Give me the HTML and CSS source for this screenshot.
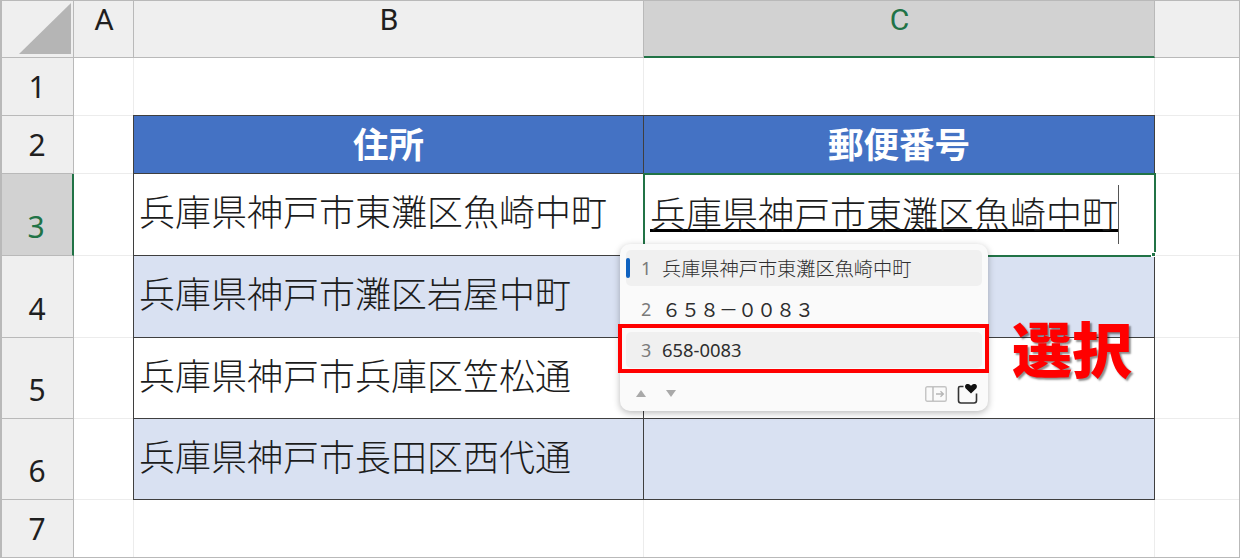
FILE: index.html
```html
<!DOCTYPE html>
<html lang="ja">
<head>
<meta charset="utf-8">
<title>Excel</title>
<link rel="stylesheet" href="styles.css">
</head>
<body>
<div class="sheet">
  <div class="cell hd corner"><svg class="corner-mark" width="73" height="57" viewBox="0 0 73 57"><polygon points="19,54 71,3 71,54" fill="#b5b5b5"/></svg></div>
  <div class="cell hd col">A</div>
  <div class="cell hd col">B</div>
  <div class="cell hd col active-col">C</div>
  <div class="cell hd col"></div>

  <div class="cell hd row">1</div><div class="cell"></div><div class="cell"></div><div class="cell"></div><div class="cell"></div>

  <div class="cell hd row">2</div><div class="cell"></div>
  <div class="cell tbl tbl-top tbl-left th">住所</div>
  <div class="cell tbl tbl-top th">郵便番号</div>
  <div class="cell"></div>

  <div class="cell hd row active-row">3</div><div class="cell"></div>
  <div class="cell tbl tbl-left td">兵庫県神戸市東灘区魚崎中町</div>
  <div class="cell tbl td editing"><span class="edit-text">兵庫県神戸市東灘区魚崎中町</span><i class="handle"></i></div>
  <div class="cell"></div>

  <div class="cell hd row">4</div><div class="cell"></div>
  <div class="cell tbl tbl-left td band">兵庫県神戸市灘区岩屋中町</div>
  <div class="cell tbl td band"></div>
  <div class="cell"></div>

  <div class="cell hd row">5</div><div class="cell"></div>
  <div class="cell tbl tbl-left td">兵庫県神戸市兵庫区笠松通</div>
  <div class="cell tbl td"></div>
  <div class="cell"></div>

  <div class="cell hd row">6</div><div class="cell"></div>
  <div class="cell tbl tbl-left td band">兵庫県神戸市長田区西代通</div>
  <div class="cell tbl td band"></div>
  <div class="cell"></div>

  <div class="cell hd row">7</div><div class="cell"></div><div class="cell"></div><div class="cell"></div><div class="cell"></div>

  <div class="ime">
    <div class="ime-item current"><i class="ime-bar"></i><span class="ime-num">1</span><span class="ime-text">兵庫県神戸市東灘区魚崎中町</span></div>
    <div class="ime-item"><span class="ime-num">2</span><span class="ime-text wide">６５８－００８３</span></div>
    <div class="ime-item current"><span class="ime-num">3</span><span class="ime-text latin">658-0083</span></div>
    <div class="ime-foot">
      <svg class="tri" width="12" height="9" viewBox="0 0 12 9"><path d="M6 1 L11 8 H1 Z" fill="#a9a9a9"/></svg>
      <svg class="tri" width="12" height="9" viewBox="0 0 12 9"><path d="M1 1 H11 L6 8 Z" fill="#a9a9a9"/></svg>
      <span class="ime-spacer"></span>
      <svg class="ico-panel" width="22" height="16" viewBox="0 0 22 16"><rect x="0.75" y="0.75" width="20.5" height="14.5" rx="1.5" fill="none" stroke="#c4c4c4" stroke-width="1.4"/><path d="M8 1V15M11 8H18M15.500 5.200L18.400 8L15.500 10.800" fill="none" stroke="#b5b5b5" stroke-width="1.3"/></svg>
      <svg class="ico-fav" width="21" height="22" viewBox="0 0 21 22"><path d="M6.500 3.500H3Q1.500 3.500 1.500 5V17.500Q1.500 20 4 20H17Q19.500 20 19.500 17.500V10.500" fill="none" stroke="#333" stroke-width="1.600"/><path d="M14 10.500L8.800 5.500C7 3 8.800 0.800 11 1C12.500 1.200 13.500 2 14 3C14.500 2 15.500 1.200 17 1C19.200 0.800 21 3 19.200 5.500Z" fill="#111"/></svg>
    </div>
    <div class="ime-frame"></div>
  </div>
  <div class="callout">選択</div>
</div>
</body>
</html>
```
FILE: styles.css
```css
* { box-sizing: border-box; }
html, body { margin: 0; padding: 0; background: #fff; }
body { width: 1240px; height: 558px; overflow: hidden; }

.sheet {
  position: relative;
  display: grid;
  grid-template-columns: 74px 60px 510px 511px 85px;
  grid-template-rows: 58px 58px 58px 82px 82px 81px 81px 58px;
  width: 1240px;
  height: 558px;
  font-family: "Noto Sans CJK JP", "Noto Sans", sans-serif;
  color: #222;
}
.sheet::after {
  content: "";
  position: absolute;
  inset: 0;
  border: 1px solid #b9b9b9;
  border-left-width: 2px;
  pointer-events: none;
}

.cell {
  position: relative;
  display: flex;
  border-right: 1px solid #ececec;
  border-bottom: 1px solid #ececec;
}

.hd {
  background: #efefef;
  border-right: 1px solid #b9b9b9;
  border-bottom: 1px solid #b9b9b9;
  font-family: "Noto Sans", sans-serif;
  font-size: 30px;
  line-height: 36px;
  color: #1f1f1f;
  justify-content: center;
}
.col {
  align-items: flex-start;
  font-family: Roboto, sans-serif;
  line-height: 36px;
  padding: 2px 0 0 1px;
}
.row { align-items: flex-end; padding: 0 0 10px 1px; }
.corner-mark { position: absolute; left: 0; top: 0; }
.active-col {
  background: #d2d2d2;
  color: #217346;
  border-bottom: 2px solid #217346;
}
.active-row {
  background: #d2d2d2;
  color: #217346;
  border-right: 2px solid #217346;
  padding-left: 0;
}

.tbl {
  border-right: 1px solid #3f3f3f;
  border-bottom: 1px solid #3f3f3f;
  align-items: center;
}
.tbl-top { border-top: 1px solid #3f3f3f; margin-top: -1px; }
.tbl-left { border-left: 1px solid #3f3f3f; margin-left: -1px; }

.th {
  background: #4472c4;
  color: #fff;
  font-size: 35.5px;
  font-weight: 700;
  line-height: 48px;
  padding-bottom: 4px;
  justify-content: center;
}
.td {
  font-size: 36px;
  font-weight: 300;
  line-height: 48px;
  padding: 0 0 9px 5px;
  white-space: nowrap;
  color: #1c1c1c;
}
.band { background: #d9e1f2; }

.editing {
  outline: 2px solid #217346;
  outline-offset: -1px;
  padding-left: 6px;
  padding-bottom: 0;
  align-items: flex-start;
  z-index: 1;
}
.edit-text {
  display: block;
  position: relative;
  height: 44px;
  margin-top: 14px;
  line-height: 48px;
  border-bottom: 3px solid #000;
}
.edit-text::after {
  content: "";
  position: absolute;
  right: -1px;
  top: -3px;
  height: 59px;
  width: 1px;
  background: #555;
}
.handle {
  position: absolute;
  right: -2px;
  bottom: -2px;
  width: 5px;
  height: 5px;
  background: #217346;
  border: 1px solid #fff;
}

.ime {
  position: absolute;
  left: 620px;
  top: 244px;
  width: 368px;
  height: 167px;
  padding: 6px 6px 0;
  display: flex;
  flex-direction: column;
  gap: 5px;
  background: #fafafa;
  border-radius: 10px;
  box-shadow: 0 2px 7px rgba(0, 0, 0, .28);
  z-index: 2;
}
.ime-item {
  position: relative;
  display: flex;
  align-items: center;
  flex: 0 0 36px;
  border-radius: 5px;
  color: #2e2e2e;
}
.current { background: #f0f0f0; }
.ime-bar {
  position: absolute;
  left: 0;
  top: 8px;
  width: 4px;
  height: 20px;
  border-radius: 2px;
  background: #0f62c0;
}
.ime-num {
  flex: 0 0 36px;
  padding-left: 15px;
  font-family: "Noto Sans", sans-serif;
  font-size: 18px;
  color: #7a7a7a;
}
.ime-text { font-size: 19.2px; font-weight: 300; line-height: 26px; white-space: nowrap; }
.ime-text.wide { font-size: 19px; font-weight: 400; }
.ime-text.latin { font-family: "Noto Sans", sans-serif; font-weight: 400; font-size: 18.4px; }
.ime-foot {
  display: flex;
  align-items: center;
  gap: 18px;
  padding: 9px 4px 0 9px;
  height: 32px;
}
.ime-spacer { flex: 1; }
.ico-panel { margin-right: -8px; }
.ime-frame {
  position: absolute;
  left: -2px;
  top: 80px;
  width: 371px;
  height: 49px;
  border: 4px solid #ff0000;
}

.callout {
  position: absolute;
  left: 1012px;
  top: 304px;
  z-index: 3;
  font-family: "Noto Sans CJK JP", sans-serif;
  font-size: 60px;
  font-weight: 900;
  line-height: 86px;
  color: #ff0000;
  text-shadow: 2px 2px 2px rgba(0, 0, 0, .45);
}
```
